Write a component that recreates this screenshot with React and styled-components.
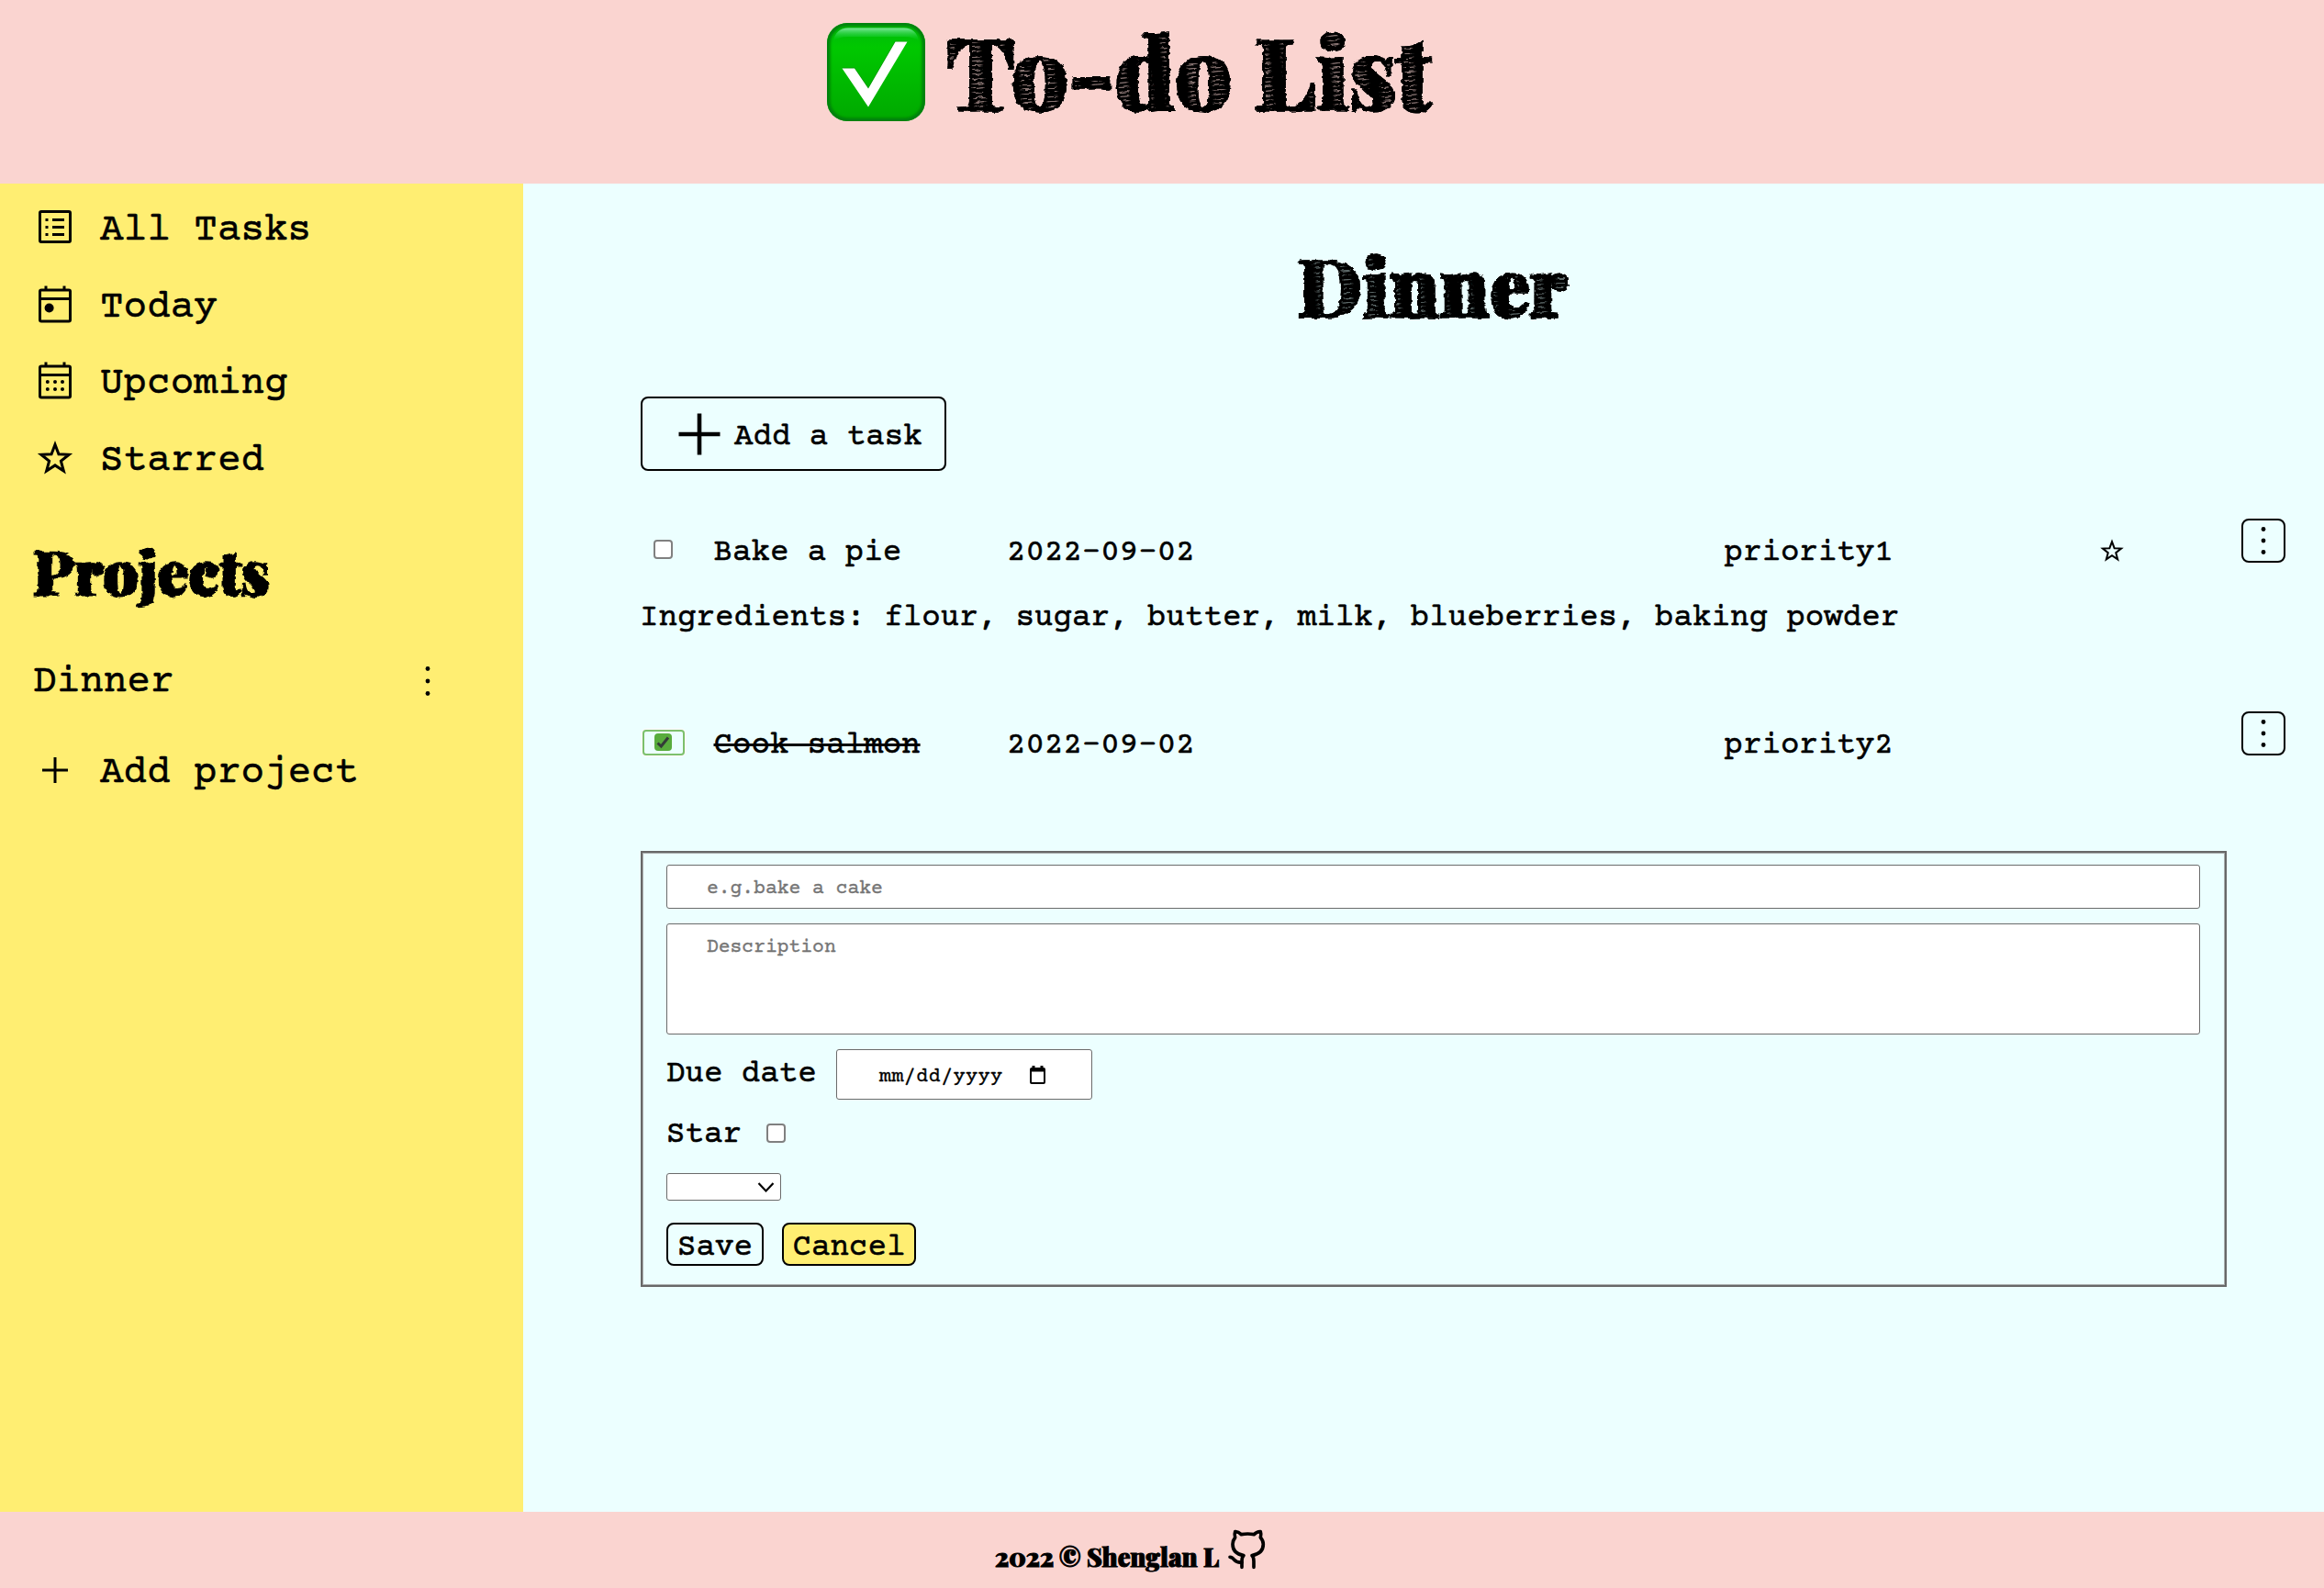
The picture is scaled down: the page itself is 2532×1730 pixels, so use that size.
import React from "react";
import styled, { createGlobalStyle, css } from "styled-components";

const pink = "#fad4d0";
const yellow = "#ffee72";
const aqua = "#ecffff";
const grey = "#6b6b6b";

const GlobalStyle = createGlobalStyle`
  * { box-sizing: border-box; }
  body { margin: 0; background: ${aqua}; color: #000; }
  body, input, textarea, button, select {
    font-family: "Courier Prime", "Liberation Mono", monospace;
  }
  svg { display: block; flex: none; }
  h1, h2, p { margin: 0; }
`;

const inked = css`
  -webkit-text-stroke: 0.6px #000;
`;

const sketch = css`
  font-family: "Playfair Display", "Liberation Serif", serif;
  font-weight: 900;
  white-space: nowrap;
  -webkit-text-stroke: ${(p) => p.$ink || 1}px #000;
`;

const rough = css`
  filter: url(#rough);
`;

const hatch = css`
  background:
    repeating-linear-gradient(84deg, #000 0 7px, transparent 11px 19px, #000 23px 26px),
    repeating-linear-gradient(176deg, #000 0 2.4px, ${(p) => p.$hatch} 3px 3.6px, #000 4.2px 5px);
  -webkit-background-clip: text;
  background-clip: text;
  -webkit-text-fill-color: transparent;
`;

const Page = styled.div`
  height: 1730px;
  display: grid;
  grid-template: 200px 1447px 83px / 570px 1fr;
`;

const Header = styled.header`
  grid-column: 1 / -1;
  display: flex;
  align-items: flex-start;
  gap: 23px;
  padding-left: 901px;
  background: ${pink};
  & > svg { margin-top: 25px; }
`;

const Title = styled.h1`
  ${sketch}
  ${hatch}
  ${rough}
  font-size: 107px;
  line-height: 152px;
  letter-spacing: 0.5px;
`;

const Sidebar = styled.aside`
  background: ${yellow};
  padding: 6px 0 0 36px;
  font-size: 42.67px;
`;

const NavItem = styled.div`
  display: flex;
  align-items: center;
  gap: 25px;
  height: 83.7px;
  margin-top: ${(p) => p.$top || 0}px;
`;

const NavText = styled.span`
  ${inked}
  line-height: 60px;
  padding-top: 8px;
`;

const ProjectsHeading = styled.h2`
  ${sketch}
  ${rough}
  margin-top: 38px;
  font-size: 66px;
  line-height: 84px;
  letter-spacing: 0.3px;
`;

const ProjectRow = styled.div`
  display: flex;
  align-items: center;
  justify-content: space-between;
  width: 442px;
  height: 60px;
  margin-top: 49px;
  & > span { ${inked} padding-top: 4px; }
`;

const Main = styled.main`
  background: ${aqua};
  padding: 60px 42px 0 128px;
  font-size: 34.13px;
  line-height: 40px;
`;

const Heading = styled.h2`
  ${sketch}
  ${hatch}
  ${rough}
  width: 1727px;
  text-align: center;
  font-size: 86px;
  line-height: 100px;
  letter-spacing: 0.9px;
`;

const Button = styled.button`
  ${inked}
  display: flex;
  align-items: center;
  justify-content: center;
  width: ${(p) => p.$w}px;
  height: ${(p) => p.$h || 47}px;
  padding: 0;
  border: 2px solid #000;
  border-radius: 8px;
  background: ${(p) => (p.$fill ? yellow : "transparent")};
  color: #000;
  font-size: 34.13px;
  line-height: 36px;
  & > span { padding-top: 9px; }
`;

const AddTask = styled(Button)`
  justify-content: flex-start;
  gap: 15px;
  margin-top: 72px;
  padding-left: 39px;
`;

const TaskList = styled.section`
  ${inked}
  display: flex;
  flex-direction: column;
  gap: 68px;
  margin-top: 52px;
`;

const TaskRow = styled.div`
  display: grid;
  grid-template-columns: 79.5px 319.5px 781.5px 406.5px 157px 48px;
  align-items: center;
  height: 72px;
  & > button { align-self: start; }
  & > span { padding-top: 3px; }
`;

const TaskName = styled.span`
  justify-self: start;
  text-decoration: ${(p) => (p.$done ? "line-through 3px" : "none")};
`;

const StarCell = styled.div`
  height: 34px;
`;

const Description = styled.p`
  margin: 0 0 -3px -1px;
  line-height: 73px;
  white-space: nowrap;
  letter-spacing: 0.02px;
`;

const CheckFrame = styled.label`
  display: flex;
  align-items: center;
  justify-content: center;
  width: 46px;
  height: 28px;
  margin: 0 0 5px 2px;
  border-radius: 4px;
  border: 2px solid ${(p) => (p.$focus ? "#7dc06c" : "transparent")};
  box-shadow: ${(p) => (p.$focus ? "0 0 0 1.5px #fafafa" : "none")};
`;

const CheckBox = styled.span`
  display: flex;
  align-items: center;
  justify-content: center;
  width: ${(p) => (p.$on ? 19 : 21)}px;
  height: ${(p) => (p.$on ? 19 : 21)}px;
  margin-right: 1px;
  border: ${(p) => (p.$on ? "0" : "2px solid #808080")};
  border-radius: 4px;
  background: ${(p) => (p.$on ? "#58ac3d" : "#fff")};
`;

const Form = styled.form`
  display: flex;
  flex-direction: column;
  align-items: flex-start;
  width: 1728px;
  height: 475px;
  margin-top: 80px;
  padding: 13px 27px 0 26px;
  border: 2px solid #686868;
  box-shadow: inset 0 0 0 1px #a9adad;
`;

const field = css`
  display: block;
  width: 100%;
  border: 1px solid ${grey};
  border-radius: 3px;
  background: #fff;
  font-size: 21.33px;
  outline: none;
  &::placeholder { color: #757575; opacity: 1; -webkit-text-stroke: 0.4px #757575; }
`;

const NameInput = styled.input`
  ${field}
  height: 48px;
  padding: 3px 43px 0;
`;

const NotesInput = styled.textarea`
  ${field}
  height: 121px;
  margin: 16px 0;
  padding: 13px 43px;
  line-height: 24px;
  resize: none;
`;

const DateRow = styled.div`
  display: flex;
  align-items: center;
  gap: 21.2px;
  height: 55px;
  & > span { ${inked} padding-top: 1px; }
`;

const DateField = styled.div`
  display: flex;
  align-items: center;
  width: 279px;
  height: 55px;
  padding-left: 46px;
  border: 1px solid ${grey};
  border-radius: 3px;
  background: #fff;
  font-size: 21.33px;
  & > span { width: 164px; padding-top: 4px; letter-spacing: 0.7px; -webkit-text-stroke: 0.4px #000; }
`;

const StarRow = styled.div`
  ${inked}
  display: flex;
  align-items: center;
  gap: 27px;
  height: 40px;
  margin-top: 16px;
`;

const StarLabel = styled.span`
  padding-top: 6px;
`;

const Select = styled.div`
  display: flex;
  align-items: center;
  justify-content: flex-end;
  width: 125px;
  height: 30px;
  margin: 24px 0;
  padding-right: 6px;
  border: 1px solid ${grey};
  border-radius: 3px;
  background: #fff;
`;

const Actions = styled.div`
  display: flex;
  gap: 20px;
`;

const Footer = styled.footer`
  grid-column: 1 / -1;
  display: flex;
  align-items: center;
  gap: 11px;
  padding-left: 1084px;
  background: ${pink};
`;

const Credit = styled.span`
  ${sketch}
  width: 243px;
  padding-top: 14px;
  font-size: 27.5px;
  line-height: 36px;
`;

const Filters = styled.svg`
  position: absolute;
  width: 0;
  height: 0;
`;

const RoughFilter = () => (
  <Filters aria-hidden="true">
    <filter id="rough" x="-5%" y="-5%" width="110%" height="110%">
      <feTurbulence type="fractalNoise" baseFrequency="0.12 0.2" numOctaves="2" seed="4" result="noise" />
      <feDisplacementMap in="SourceGraphic" in2="noise" scale="5" xChannelSelector="R" yChannelSelector="G" />
    </filter>
  </Filters>
);

const CheckEmoji = () => (
  <svg width="107" height="107" viewBox="0 0 107 107">
    <defs>
      <linearGradient id="face" x1="0" y1="0" x2="0" y2="1">
        <stop offset="0" stopColor="#00b80c" />
        <stop offset="0.25" stopColor="#00c800" />
        <stop offset="1" stopColor="#00a800" />
      </linearGradient>
      <linearGradient id="gloss" x1="0" y1="0" x2="0" y2="1">
        <stop offset="0" stopColor="#7ce89a" />
        <stop offset="1" stopColor="#00cb20" stopOpacity="0" />
      </linearGradient>
      <filter id="soft"><feGaussianBlur stdDeviation="1.4" /></filter>
      <clipPath id="tile"><rect width="107" height="107" rx="22" /></clipPath>
    </defs>
    <g clipPath="url(#tile)">
      <rect width="107" height="107" fill="url(#face)" />
      <rect x="1" y="1" width="105" height="105" rx="21" fill="none" stroke="#007d08" strokeWidth="5" filter="url(#soft)" />
      <path d="M7 20Q9 6 23 5.500H84Q98 6 100 20Q95 15 84 15H23Q12 15 7 20Z" fill="url(#gloss)" />
    </g>
    <path d="M16.500 48.500H30L45 70L74 19.700H87.500L45 91Z" fill="#087808" opacity="0.5" />
    <path d="M16.500 49.500H30L45 71.500L74.500 20.500H87.500L45 91.500Z" fill="#fff" />
  </svg>
);

const ListIcon = () => (
  <svg width="48" height="48" fill="none" stroke="#000" strokeWidth="3">
    <rect x="7.500" y="6.500" width="33" height="33" rx="1.500" />
    <path d="M21 15.500H34M21 23.500H34M21 31.500H34M13.500 15.500H16.500M13.500 23.500H16.500M13.500 31.500H16.500" />
  </svg>
);

const CalendarIcon = ({ dots }) => (
  <svg width="48" height="48" fill="none" stroke="#000" strokeWidth="3">
    <rect x="7.500" y="8" width="33" height="34" rx="1.500" />
    <path d="M7 17.500H41M14 3.500V8M34 3.500V8" />
    <g fill="#000" stroke="none">
      {dots ? (
        [15.8, 24, 32].map((x) => [25, 33].map((y) => <circle key={x + "-" + y} cx={x} cy={y} r="2" />))
      ) : (
        <circle cx="17.600" cy="27.500" r="5" />
      )}
    </g>
  </svg>
);

const starPoints = Array.from({ length: 10 }, (_, i) => {
  const r = i % 2 ? 6.7 : 15.9;
  const a = (Math.PI / 5) * i;
  return `${24 + r * Math.sin(a)},${25.2 - r * Math.cos(a)}`;
}).join(" ");

const StarIcon = ({ size = 48 }) => (
  <svg width={size} height={size} viewBox="0 0 48 48">
    <polygon points={starPoints} fill="none" stroke="#000" strokeWidth="3" strokeMiterlimit="10" />
  </svg>
);

const PlusIcon = ({ size = 48, arm = 14, stroke = 3 }) => (
  <svg width={size} height={size} viewBox={`${-size / 2} ${-size / 2} ${size} ${size}`} stroke="#000" strokeWidth={stroke}>
    <path d={`M${-arm} 0H${arm}M0 ${-arm}V${arm}`} />
  </svg>
);

const DotsIcon = ({ step }) => (
  <svg width="24" height="40" viewBox="-12 -20 24 40">
    {[-step, 0, step].map((y) => <circle key={y} cy={y} r="2.400" />)}
  </svg>
);

const GithubIcon = () => (
  <svg width="41.670" height="45.670" viewBox="895 108 125 137" fill="none" stroke="#000" strokeWidth="11" strokeLinecap="round" strokeLinejoin="round">
    <path d="M940 232V212Q940 199 946 194C922 190 910 177 910 157Q910 145 918 135Q915 123 918 116Q928 115 938 125Q959 121 980 125Q990 115 1001 116Q1004 123 1001 135Q1010 145 1010 157C1010 177 996 190 973 194Q979 199 979 212V232" />
    <path d="M940 216Q924 218 915 208Q909 199 901 199" />
  </svg>
);

const Check = ({ on, focus }) => (
  <CheckFrame $focus={focus}>
    <CheckBox $on={on}>
      {on && (
        <svg width="15" height="15" viewBox="0 0 15 15" fill="none" stroke="#333b38" strokeWidth="3">
          <path d="M1.500 8.500L5.300 12L13 2.500" />
        </svg>
      )}
    </CheckBox>
  </CheckFrame>
);

const navigation = [
  ["All Tasks", <ListIcon />],
  ["Today", <CalendarIcon />],
  ["Upcoming", <CalendarIcon dots />],
  ["Starred", <StarIcon />],
];

const tasks = [
  {
    name: "Bake a pie",
    date: "2022-09-02",
    priority: "priority1",
    star: true,
    text: "Ingredients: flour, sugar, butter, milk, blueberries, baking powder",
  },
  { name: "Cook salmon", date: "2022-09-02", priority: "priority2", done: true },
];

const Task = ({ task }) => (
  <div>
    <TaskRow>
      <Check on={task.done} focus={task.done} />
      <TaskName $done={task.done}>{task.name}</TaskName>
      <span>{task.date}</span>
      <span>{task.priority}</span>
      <StarCell>{task.star && <StarIcon size={32} />}</StarCell>
      <Button $w={48} $h={48} aria-label="Task menu"><DotsIcon step={12.5} /></Button>
    </TaskRow>
    {task.text && <Description>{task.text}</Description>}
  </div>
);

export default function App() {
  return (
    <Page>
      <GlobalStyle />
      <RoughFilter />
      <Header>
        <CheckEmoji />
        <Title $ink={3} $hatch="#857270">To-do List</Title>
      </Header>
      <Sidebar>
        {navigation.map(([label, icon]) => (
          <NavItem key={label}>
            {icon}
            <NavText>{label}</NavText>
          </NavItem>
        ))}
        <ProjectsHeading $ink={2.5}>Projects</ProjectsHeading>
        <ProjectRow>
          <span>Dinner</span>
          <DotsIcon step={13.5} />
        </ProjectRow>
        <NavItem $top={25}>
          <PlusIcon />
          <NavText>Add project</NavText>
        </NavItem>
      </Sidebar>
      <Main>
        <Heading $ink={3} $hatch="#5c6868">Dinner</Heading>
        <AddTask $w={333} $h={81}>
          <PlusIcon size={46} arm={22.5} stroke={4.6} />
          <span>Add a task</span>
        </AddTask>
        <TaskList>
          {tasks.map((task) => <Task key={task.name} task={task} />)}
        </TaskList>
        <Form>
          <NameInput placeholder="e.g.bake a cake" />
          <NotesInput placeholder="Description" />
          <DateRow>
            <span>Due date</span>
            <DateField>
              <span>mm/dd/yyyy</span>
              <svg width="17" height="20" fill="none" stroke="#000" strokeWidth="2">
                <rect x="1" y="3" width="15" height="16" rx="1" />
                <path d="M1 5H16M4 0V4M13 0V4" strokeWidth="3" />
              </svg>
            </DateField>
          </DateRow>
          <StarRow>
            <StarLabel>Star</StarLabel>
            <CheckBox />
          </StarRow>
          <Select>
            <svg width="19" height="13" fill="none" stroke="#000" strokeWidth="2.200">
              <path d="M1.500 2L9.500 10.500L17.500 2" />
            </svg>
          </Select>
          <Actions>
            <Button type="button" $w={106}><span>Save</span></Button>
            <Button type="button" $w={146} $fill><span>Cancel</span></Button>
          </Actions>
        </Form>
      </Main>
      <Footer>
        <Credit $ink={1}>2022 © Shenglan L</Credit>
        <GithubIcon />
      </Footer>
    </Page>
  );
}
